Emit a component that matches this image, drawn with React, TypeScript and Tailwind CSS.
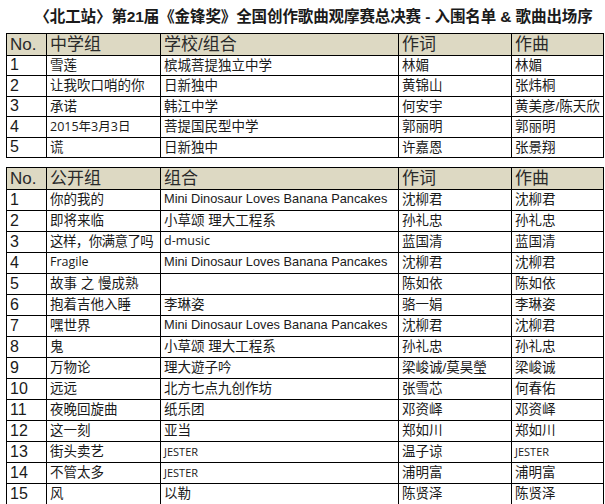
const cjk = "font-['Liberation_Sans','Noto_Sans_CJK_SC',sans-serif]";

type Row = [string, string, string, string, string];

const school: Row[] = [
  ["1", "雪莲", "槟城菩提独立中学", "林媚", "林媚"],
  ["2", "让我吹口哨的你", "日新独中", "黄锦山", "张炜桐"],
  ["3", "承诺", "韩江中学", "何安宇", "黄美彦/陈天欣"],
  ["4", "2015年3月3日", "菩提国民型中学", "郭丽明", "郭丽明"],
  ["5", "谎", "日新独中", "许嘉恩", "张景翔"],
];

const open: Row[] = [
  ["1", "你的我的", "Mini Dinosaur Loves Banana Pancakes", "沈柳君", "沈柳君"],
  ["2", "即将来临", "小草颂 理大工程系", "孙礼忠", "孙礼忠"],
  ["3", "这样，你满意了吗", "d-music", "蓝国清", "蓝国清"],
  ["4", "Fragile", "Mini Dinosaur Loves Banana Pancakes", "沈柳君", "沈柳君"],
  ["5", "故事 之 慢成熟", "", "陈如依", "陈如依"],
  ["6", "抱着吉他入睡", "李琳姿", "骆一娟", "李琳姿"],
  ["7", "嘿世界", "Mini Dinosaur Loves Banana Pancakes", "沈柳君", "沈柳君"],
  ["8", "鬼", "小草颂 理大工程系", "孙礼忠", "孙礼忠"],
  ["9", "万物论", "理大遊子吟", "梁峻诚/莫昊瑩", "梁峻诚"],
  ["10", "远远", "北方七点九创作坊", "张雪芯", "何春佑"],
  ["11", "夜晚回旋曲", "纸乐团", "邓资峄", "邓资峄"],
  ["12", "这一刻", "亚当", "郑如川", "郑如川"],
  ["13", "街头卖艺", "JESTER", "温子谅", "JESTER"],
  ["14", "不管太多", "JESTER", "浦明富", "浦明富"],
  ["15", "风", "以勒", "陈贤泽", "陈贤泽"],
];

const smallText = new Set(["2015年3月3日", "Fragile", "d-music"]);

function Cell({ text, col }: { text: string; col: number }) {
  let cls = "text-[13.5px] " + cjk;
  if (col === 0) cls = "text-[16px] font-['Liberation_Sans',sans-serif]";
  else if (text === "JESTER") cls = "text-[11px] font-['Open_Sans',sans-serif]";
  else if (smallText.has(text)) cls = "text-[12.5px] font-['Open_Sans','Noto_Sans_CJK_SC',sans-serif]";
  else if (text.includes("，")) cls = "text-[13.5px] tracking-[-0.6px] " + cjk;
  else if (/^[A-Za-z ]+$/.test(text)) cls = "text-[12.8px] font-['Liberation_Sans',sans-serif]";
  return (
    <td className={`border border-black pl-[3px] whitespace-nowrap overflow-hidden leading-none align-middle ${cls}`}>
      {text}
    </td>
  );
}

function Sheet({
  head,
  rows,
  rowH,
}: {
  head: string[];
  rows: Row[];
  rowH: string;
}) {
  return (
    <table className="border-collapse border-[1.5px] border-black w-[597px] table-fixed text-[#1a1a1a]">
      <colgroup>
        <col className="w-[40px]" />
        <col className="w-[114px]" />
        <col className="w-[238px]" />
        <col className="w-[113px]" />
        <col className="w-[92px]" />
      </colgroup>
      <thead>
        <tr className="h-[21.5px] bg-[#ddd9c3]">
          {head.map((h, i) => (
            <th
              key={i}
              className={`border border-black pl-[3px] text-left font-normal leading-none whitespace-nowrap text-[17px] ${cjk} text-[#2a2a2a]`}
            >
              {h}
            </th>
          ))}
        </tr>
      </thead>
      <tbody>
        {rows.map((r, i) => (
          <tr key={i} className={rowH}>
            {r.map((c, j) => (
              <Cell key={j} text={c} col={j} />
            ))}
          </tr>
        ))}
      </tbody>
    </table>
  );
}

export default function App() {
  return (
    <div className="w-[605px] h-[504px] bg-white overflow-hidden">
      <h1
        className={`h-[33px] flex items-center justify-center pl-[22px] whitespace-nowrap text-[15.5px] font-bold tracking-[-0.1px] text-[#1a1a1a] ${cjk}`}
      >
        〈北工站〉第21届《金锋奖》全国创作歌曲观摩赛总决赛 - 入围名单 &amp; 歌曲出场序
      </h1>
      <div className="pl-[6px]">
        <Sheet head={["No.", "中学组", "学校/组合", "作词", "作曲"]} rows={school} rowH="h-[20.5px]" />
      </div>
      <div className="pl-[6px] pt-[9px]">
        <Sheet head={["No.", "公开组", "组合", "作词", "作曲"]} rows={open} rowH="h-[21px]" />
      </div>
    </div>
  );
}
